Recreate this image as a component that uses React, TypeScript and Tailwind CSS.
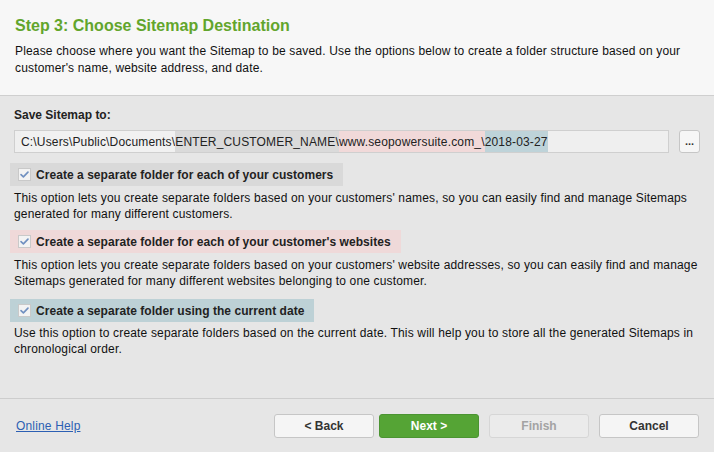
const font = { fontFamily: '"Liberation Sans", Arial, sans-serif' };

const Check = () => (
  <span className="flex h-[13px] w-[13px] items-center justify-center border border-[#c9c9c9] bg-[#f3f3f3]">
    <svg viewBox="0 0 12 12" className="h-[11px] w-[11px]" fill="none">
      <path d="M2.2 6.2 L4.8 8.6 L9.8 3.4" stroke="#7090c0" strokeWidth={1.8} strokeLinecap="round" strokeLinejoin="round" />
    </svg>
  </span>
);

const Option = ({ label, bg }: { label: string; bg: string }) => (
  <div className={`-ml-[4px] inline-flex h-[23px] items-center gap-[5px] self-start pl-[8px] pr-[10px] ${bg}`}>
    <Check />
    <span className="text-[12px] font-bold tracking-[0.05px] text-[#222]">{label}</span>
  </div>
);

export default function App() {
  return (
    <div style={font} className="flex h-[452px] w-[714px] flex-col overflow-hidden whitespace-nowrap bg-[#e6e6e6] text-[12px] tracking-[0.16px] text-[#111]">
      {/* Header */}
      <div className="h-[96px] border-b border-[#cfcfcf] bg-[#f7f7f7] px-[15px] pt-[16px]">
        <h1 className="text-[16px] font-bold leading-[20px] tracking-normal text-[#62a52c]">Step 3: Choose Sitemap Destination</h1>
        <p className="mt-[7px] leading-[17px]">
          Please choose where you want the Sitemap to be saved. Use the options below to create a folder structure based on your
          <br />
          customer's name, website address, and date.
        </p>
      </div>

      {/* Body */}
      <div className="flex flex-1 flex-col px-[14px] pt-[11px]">
        <div className="font-bold leading-[16px] tracking-normal text-[#222]">Save Sitemap to:</div>
        <div className="mt-[7px] flex items-center gap-[10px]">
          <div className="flex h-[23px] w-[656px] items-center border border-[#cfcfcf] bg-[#efefef] pl-[6px] text-[#222]">
            <span className="flex h-full items-center bg-[#f1f1f1]">C:\Users\Public\Documents\</span>
            <span className="flex h-full items-center bg-[#dadada]">ENTER_CUSTOMER_NAME\</span>
            <span className="flex h-full items-center bg-[#f1d9d9]">www.seopowersuite.com_\</span>
            <span className="flex h-full items-center bg-[#bed3d9]">2018-03-27</span>
          </div>
          <button className="flex h-[23px] w-[21px] items-end justify-center rounded-[3px] border border-[#c6c6c6] bg-[#f6f6f6] pb-[5px] text-[11px] font-bold leading-none tracking-normal text-[#333]">
            ...
          </button>
        </div>

        <div className="mt-[10px] flex flex-col">
          <Option label="Create a separate folder for each of your customers" bg="bg-[#d9d9d9]" />
          <p className="mt-[4px] leading-[16px]">
            This option lets you create separate folders based on your customers' names, so you can easily find and manage Sitemaps
            <br />
            generated for many different customers.
          </p>
          <div className="mt-[8px]" />
          <Option label="Create a separate folder for each of your customer's websites" bg="bg-[#efd9d9]" />
          <p className="mt-[4px] leading-[16px]">
            This option lets you create separate folders based on your customers' website addresses, so you can easily find and manage
            <br />
            Sitemaps generated for many different websites belonging to one customer.
          </p>
          <div className="mt-[10px]" />
          <Option label="Create a separate folder using the current date" bg="bg-[#bdd1d6]" />
          <p className="mt-[3px] leading-[16px]">
            Use this option to create separate folders based on the current date. This will help you to store all the generated Sitemaps in
            <br />
            chronological order.
          </p>
        </div>
      </div>

      {/* Footer */}
      <div className="flex h-[54px] items-center border-t border-[#cdcdcd] pl-[16px] pr-[15px]">
        <a href="#" className="text-[#2c5fb3] underline">Online Help</a>
        <div className="ml-auto flex items-center tracking-normal">
          <button className="h-[24px] w-[100px] rounded-[3px] border border-[#c6c6c6] bg-[#f5f5f5] text-[12px] font-bold text-[#333]">&lt; Back</button>
          <button className="ml-[5px] h-[24px] w-[100px] rounded-[3px] border border-[#4b9432] bg-[#55a435] text-[12px] font-bold text-white">Next &gt;</button>
          <button className="ml-[10px] h-[24px] w-[100px] rounded-[3px] border border-[#d6d6d6] bg-[#ebebeb] text-[12px] font-bold text-[#a3a3a3]">Finish</button>
          <button className="ml-[10px] h-[24px] w-[100px] rounded-[3px] border border-[#c6c6c6] bg-[#f5f5f5] text-[12px] font-bold text-[#333]">Cancel</button>
        </div>
      </div>
    </div>
  );
}
